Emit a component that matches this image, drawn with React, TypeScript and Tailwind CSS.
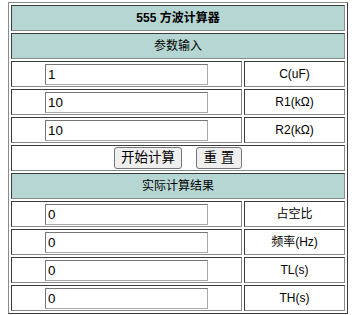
import { useState } from 'react'

const font = { fontFamily: '"Liberation Sans", Arial, "Noto Sans CJK SC", sans-serif' }

const cell =
  'h-[26px] p-0 border border-t-[#3c3c3c] border-l-[#3c3c3c] border-b-[#8a8a8a] border-r-[#8a8a8a]'

function HeadRow({ text, bold }: { text: string; bold?: boolean }) {
  return (
    <tr>
      <td colSpan={2} className={`${cell} bg-[#b6d6d3] text-center text-[12px] ${bold ? 'font-bold' : ''}`}>
        {text}
      </td>
    </tr>
  )
}

function FieldRow({ label, value, onChange }: { label: string; value: string; onChange?: (v: string) => void }) {
  return (
    <tr>
      <td className={`${cell} w-[231px] text-center`}>
        <input
          className="mx-auto block h-[21px] w-[163px] border border-t-[#767676] border-l-[#767676] border-b-[#a9a9a9] border-r-[#a9a9a9] bg-white px-[2px] text-[13.33px] text-black outline-none"
          style={font}
          value={value}
          readOnly={!onChange}
          onChange={(event) => onChange?.(event.target.value)}
        />
      </td>
      <td className={`${cell} text-center text-[12px]`}>{label}</td>
    </tr>
  )
}

export default function App() {
  const [c, setC] = useState('1')
  const [r1, setR1] = useState('10')
  const [r2, setR2] = useState('10')
  const [out, setOut] = useState(['0', '0', '0', '0'])

  function calc() {
    const cv = parseFloat(c) * 1e-6
    const a = parseFloat(r1) * 1e3
    const b = parseFloat(r2) * 1e3
    const th = 0.693 * (a + b) * cv
    const tl = 0.693 * b * cv
    const duty = th / (th + tl)
    setOut([duty.toFixed(4), (1 / (th + tl)).toFixed(4), tl.toFixed(6), th.toFixed(6)])
  }

  function reset() {
    setC('1')
    setR1('10')
    setR2('10')
    setOut(['0', '0', '0', '0'])
  }

  return (
    <div className="min-h-[315px] bg-white pt-[2px] pl-[8px] text-black" style={font}>
      <table className="w-[340px] border-separate border-spacing-[2px] border border-t-[#8a8a8a] border-l-[#8a8a8a] border-b-[#3c3c3c] border-r-[#3c3c3c]">
        <tbody>
          <HeadRow text="555 方波计算器" bold />
          <HeadRow text="参数输入" />
          <FieldRow label="C(uF)" value={c} onChange={setC} />
          <FieldRow label="R1(kΩ)" value={r1} onChange={setR1} />
          <FieldRow label="R2(kΩ)" value={r2} onChange={setR2} />
          <tr>
            <td colSpan={2} className={cell}>
              <div className="flex items-center justify-center gap-[14px]">
                <button
                  className="h-[22px] w-[68px] rounded-[3px] border border-[#767676] bg-[#efefef] p-0 text-[13.5px] leading-none"
                  onClick={calc}
                >
                  开始计算
                </button>
                <button
                  className="h-[22px] w-[46px] rounded-[3px] border border-[#767676] bg-[#efefef] p-0 text-[13.5px] leading-none"
                  onClick={reset}
                >
                  重 置
                </button>
              </div>
            </td>
          </tr>
          <HeadRow text="实际计算结果" />
          <FieldRow label="占空比" value={out[0]} />
          <FieldRow label="频率(Hz)" value={out[1]} />
          <FieldRow label="TL(s)" value={out[2]} />
          <FieldRow label="TH(s)" value={out[3]} />
        </tbody>
      </table>
    </div>
  )
}
